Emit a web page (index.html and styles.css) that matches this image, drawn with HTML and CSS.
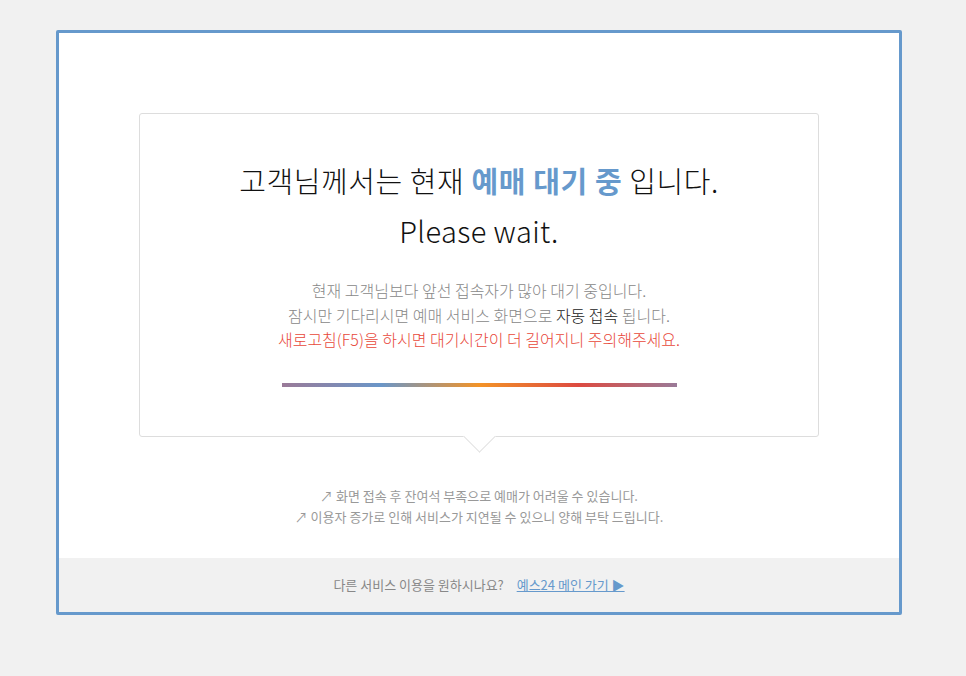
FILE: index.html
```html
<html>

<head>
    <meta charset="UTF-8">
    <meta name="viewport" content="width=device-width, initial-scale=1.0">
    <link rel="stylesheet" href="styles.css">
</head>

<body>
    <div class="wrap">
        <div class="box">
            <h1 class="tit">고객님께서는 현재 <em>예매 대기 중</em> 입니다.</h1>
            <h2 class="sub">Please wait.</h2>
            <p class="msg">
                현재 고객님보다 앞선 접속자가 많아 대기 중입니다.<br>
                잠시만 기다리시면 예매 서비스 화면으로 <b>자동 접속</b> 됩니다.<br>
                <span class="warn">새로고침(F5)을 하시면 대기시간이 더 길어지니 주의해주세요.</span>
            </p>
            <div class="bar"></div>
        </div>
        <ul class="notes">
            <li>↗ 화면 접속 후 잔여석 부족으로 예매가 어려울 수 있습니다.</li>
            <li>↗ 이용자 증가로 인해 서비스가 지연될 수 있으니 양해 부탁 드립니다.</li>
        </ul>
        <div class="foot">
            다른 서비스 이용을 원하시나요? <a href="#">예스24 메인 가기 ▶</a>
        </div>
    </div>
</body>

</html>
```

FILE: styles.css
```css
body {
    margin: 0;
    background: #f1f1f1;
    font-family: "Noto Sans CJK KR", "Noto Sans", sans-serif;
    color: #888;
}
.wrap {
    margin: 30px 0 0 56px;
    width: 840px;
    background: #fff;
    border: 3px solid #6699cc;
    border-radius: 2px;
}
.box {
    position: relative;
    margin: 80px auto 0;
    width: 678px;
    padding: 46px 0 49px;
    border: 1px solid #ddd;
    border-radius: 3px;
    text-align: center;
}
.box:after {
    content: "";
    position: absolute;
    left: 50%;
    bottom: -12px;
    width: 22px;
    height: 22px;
    margin-left: -11px;
    background: #fff;
    border-right: 1px solid #e2e2e2;
    border-bottom: 1px solid #e2e2e2;
    transform: rotate(45deg);
}
.tit {
    margin: 0;
    font-size: 29px;
    line-height: 40px;
    letter-spacing: 0.6px;
    font-weight: 300;
    color: #111;
}
.tit em {
    font-style: normal;
    font-weight: bold;
    color: #6699cc;
}
.sub {
    margin: 10px 0 0;
    font-size: 29px;
    line-height: 40px;
    letter-spacing: 0.4px;
    font-weight: 300;
    color: #111;
}
.msg {
    margin: 28px 0 0;
    font-size: 16px;
    line-height: 24.5px;
    font-weight: 300;
}
.msg b {
    font-weight: 300;
    color: #222;
}
.warn {
    color: #e8483a;
}
.bar {
    margin: 31px auto 0;
    width: 395px;
    height: 4px;
    background: linear-gradient(to right, #9a7a98, #6a96c8 25%, #f39327 50%, #dd4a40 75%, #9a7a98);
}
.notes {
    margin: 48px 0 0;
    padding: 0;
    list-style: none;
    text-align: center;
    font-size: 13px;
    line-height: 21px;
    color: #999;
}
.foot {
    margin-top: 31px;
    height: 54px;
    line-height: 54px;
    background: #f1f1f1;
    text-align: center;
    font-size: 13px;
    color: #888;
}
.foot a {
    margin-left: 10px;
    color: #6699cc;
}
```
